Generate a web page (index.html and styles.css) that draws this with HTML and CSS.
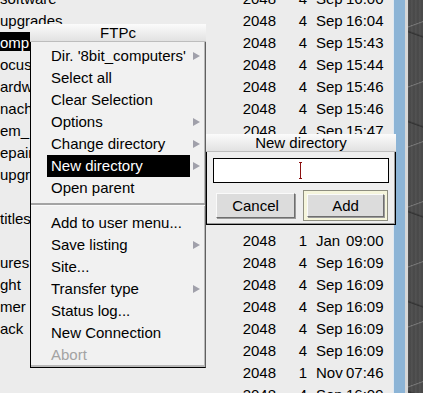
FILE: index.html
```html
<!DOCTYPE html>
<html lang="en">
<head>
    <meta charset="UTF-8">
    <title>FTPc</title>
    <link rel="stylesheet" href="styles.css">
</head>
<body>
    <div class="desktop">
        <div class="filer">
            <ul class="listing">
                <li class="row"><span class="name wide">software</span><span class="size">2048</span><span class="day">4</span><span class="mon">Sep</span><span class="time">16:00</span></li>
                <li class="row"><span class="name wide">upgrades</span><span class="size">2048</span><span class="day">4</span><span class="mon">Sep</span><span class="time">16:04</span></li>
                <li class="row"><span class="name selected">omp</span><span class="size">2048</span><span class="day">4</span><span class="mon">Sep</span><span class="time">15:43</span></li>
                <li class="row"><span class="name">ocus</span><span class="size">2048</span><span class="day">4</span><span class="mon">Sep</span><span class="time">15:44</span></li>
                <li class="row"><span class="name">ardw</span><span class="size">2048</span><span class="day">4</span><span class="mon">Sep</span><span class="time">15:46</span></li>
                <li class="row"><span class="name">nachi</span><span class="size">2048</span><span class="day">4</span><span class="mon">Sep</span><span class="time">15:46</span></li>
                <li class="row"><span class="name">em_</span><span class="size">2048</span><span class="day">4</span><span class="mon">Sep</span><span class="time">15:47</span></li>
                <!-- rows below are hidden behind the dialog on the right -->
                <li class="row"><span class="name">epair</span></li>
                <li class="row"><span class="name">upgra</span></li>
                <li class="row"><span class="name"></span></li>
                <li class="row"><span class="name">titles</span></li>
                <li class="row"><span class="name"></span><span class="size">2048</span><span class="day">1</span><span class="mon">Jan</span><span class="time">09:00</span></li>
                <li class="row"><span class="name">ures</span><span class="size">2048</span><span class="day">4</span><span class="mon">Sep</span><span class="time">16:09</span></li>
                <li class="row"><span class="name">ght</span><span class="size">2048</span><span class="day">4</span><span class="mon">Sep</span><span class="time">16:09</span></li>
                <li class="row"><span class="name">mer</span><span class="size">2048</span><span class="day">4</span><span class="mon">Sep</span><span class="time">16:09</span></li>
                <li class="row"><span class="name">ack</span><span class="size">2048</span><span class="day">4</span><span class="mon">Sep</span><span class="time">16:09</span></li>
                <li class="row"><span class="name"></span><span class="size">2048</span><span class="day">4</span><span class="mon">Sep</span><span class="time">16:09</span></li>
                <li class="row"><span class="name"></span><span class="size">2048</span><span class="day">1</span><span class="mon">Nov</span><span class="time">07:46</span></li>
                <li class="row"><span class="name"></span><span class="size">2048</span><span class="day">4</span><span class="mon">Sep</span><span class="time">16:09</span></li>
            </ul>
        </div>
        <div class="scroll-strip"></div>
        <div class="edge-strip"></div>
        <div class="backdrop"></div>
    </div>

    <!-- FTPc menu -->
    <div class="menu">
        <div class="title-bar">FTPc</div>
        <ul class="menu-body">
            <li class="item"><span class="label">Dir. '8bit_computers'</span><span class="arrow"></span></li>
            <li class="item"><span class="label">Select all</span></li>
            <li class="item"><span class="label">Clear Selection</span></li>
            <li class="item"><span class="label">Options</span><span class="arrow"></span></li>
            <li class="item"><span class="label">Change directory</span><span class="arrow"></span></li>
            <li class="item active"><span class="label">New directory</span><span class="arrow"></span></li>
            <li class="item"><span class="label">Open parent</span></li>
            <li class="separator"></li>
            <li class="item"><span class="label">Add to user menu...</span></li>
            <li class="item"><span class="label">Save listing</span><span class="arrow"></span></li>
            <li class="item"><span class="label">Site...</span></li>
            <li class="item"><span class="label">Transfer type</span><span class="arrow"></span></li>
            <li class="item"><span class="label">Status log...</span></li>
            <li class="item"><span class="label">New Connection</span></li>
            <li class="item disabled"><span class="label">Abort</span></li>
        </ul>
    </div>

    <!-- New directory submenu dialog -->
    <div class="dialog">
        <div class="title-bar">New directory</div>
        <div class="dialog-body">
            <div class="text-field"><span class="caret"></span></div>
            <div class="buttons">
                <button class="btn">Cancel</button>
                <div class="default-ring"><button class="btn">Add</button></div>
            </div>
        </div>
    </div>
</body>
</html>
```

FILE: styles.css
```css
* {
    margin: 0;
    padding: 0;
    box-sizing: border-box;
}

body {
    font-family: 'Liberation Sans', Arial, sans-serif;
    font-size: 15px;
    color: #000;
    background: #ececec;
    overflow: hidden;
}

.desktop {
    display: flex;
    height: 393px;
}

.filer {
    width: 393px;
    height: 393px;
    overflow: hidden;
    background: #ececec;
}

.listing {
    list-style: none;
    margin-top: -12px;
}

.row {
    display: grid;
    grid-template-columns: 236px 40px 31px 39px 1fr;
    height: 22px;
    line-height: 22px;
    white-space: nowrap;
}

/* names run under the menu, so only the first 30px show */
.name {
    align-self: start;
    width: 30px;
    height: 20px;
    overflow: hidden;
}

.name.wide {
    width: auto;
    overflow: visible;
}

.name.selected {
    background: #000;
    color: #fff;
    height: 19px;
}

.size,
.day {
    text-align: right;
}

.mon {
    padding-left: 9px;
}

.scroll-strip {
    width: 12px;
    background: #8cb4d6;
    border-left: 1px solid #dfe9f2;
}

.edge-strip {
    width: 3px;
    background: #d6d6d6;
}

.backdrop {
    flex: 1;
    background-color: #4e4e4e;
    background-image:
        linear-gradient(160deg, transparent 40%, rgba(255,255,255,0.25) 41%, transparent 43%),
        linear-gradient(20deg, transparent 60%, rgba(0,0,0,0.35) 61%, transparent 63%),
        repeating-linear-gradient(90deg, #525252 0, #474747 2px, #555 4px);
    background-size: 15px 60px, 15px 90px, auto;
}

/* title bars shared by menu and dialog */
.title-bar {
    height: 18px;
    line-height: 17px;
    text-align: center;
    background: linear-gradient(#fbfbfb, #e2e2e2);
    border-bottom: 1px solid #bdbdbd;
}

.menu {
    position: absolute;
    left: 30px;
    top: 24px;
    width: 176px;
}

.menu-body {
    list-style: none;
    background: #f1f1f1;
    border-left: 1px solid #000;
    border-right: 1px solid #606060;
    border-bottom: 1px solid #000;
    box-shadow: inset -1px -2px 0 #b8b8b8;
    padding: 3px 0 1px 16px;
}

.item {
    display: flex;
    align-items: center;
    height: 22px;
    line-height: 22px;
    white-space: nowrap;
}

.item .label {
    width: 143px;
    padding-left: 4px;
}

.item.active .label {
    background: #000;
    color: #fff;
}

.item.disabled .label {
    color: #a3a3a3;
}

.arrow {
    margin-left: 3px;
    width: 0;
    height: 0;
    border-left: 7px solid #a0a0aa;
    border-top: 4px solid transparent;
    border-bottom: 4px solid transparent;
}

.separator {
    list-style: none;
    margin: 4px 0 6px -16px;
    border-top: 2px solid #a4a4a4;
    border-bottom: 1px solid #fafafa;
    height: 0;
}

.dialog {
    position: absolute;
    left: 206px;
    top: 134px;
    width: 190px;
}

.dialog-body {
    background: #eeeeee;
    border-left: 1px solid #000;
    border-right: 1px solid #000;
    border-bottom: 1px solid #000;
    box-shadow: inset -1px -1px 0 #9a9a9a;
    padding: 6px 6px 3px 6px;
}

.text-field {
    height: 25px;
    background: #fff;
    border: 1px solid #000;
    display: flex;
    justify-content: center;
    align-items: center;
}

.caret {
    width: 3px;
    height: 17px;
    border-top: 1px solid #8b1010;
    border-bottom: 1px solid #8b1010;
    background: linear-gradient(90deg, transparent 1px, #8b1010 1px, #8b1010 2px, transparent 2px);
    margin-left: -1px;
}

.buttons {
    display: flex;
    justify-content: space-between;
    align-items: center;
    margin-top: 7px;
    padding: 0 1px 0 3px;
}

.btn {
    font-family: 'Liberation Sans', Arial, sans-serif;
    font-size: 15px;
    color: #000;
    width: 79px;
    height: 25px;
    background: #dcdcdc;
    border: 1px solid;
    border-color: #fafafa #6e6e6e #6e6e6e #fafafa;
    box-shadow: 1px 1px 0 #9a9a9a;
}

.default-ring {
    padding: 3px;
    background: #f5f5dc;
    border: 1px solid #8e8e80;
}

.default-ring .btn {
    width: 77px;
    height: 23px;
}
```
